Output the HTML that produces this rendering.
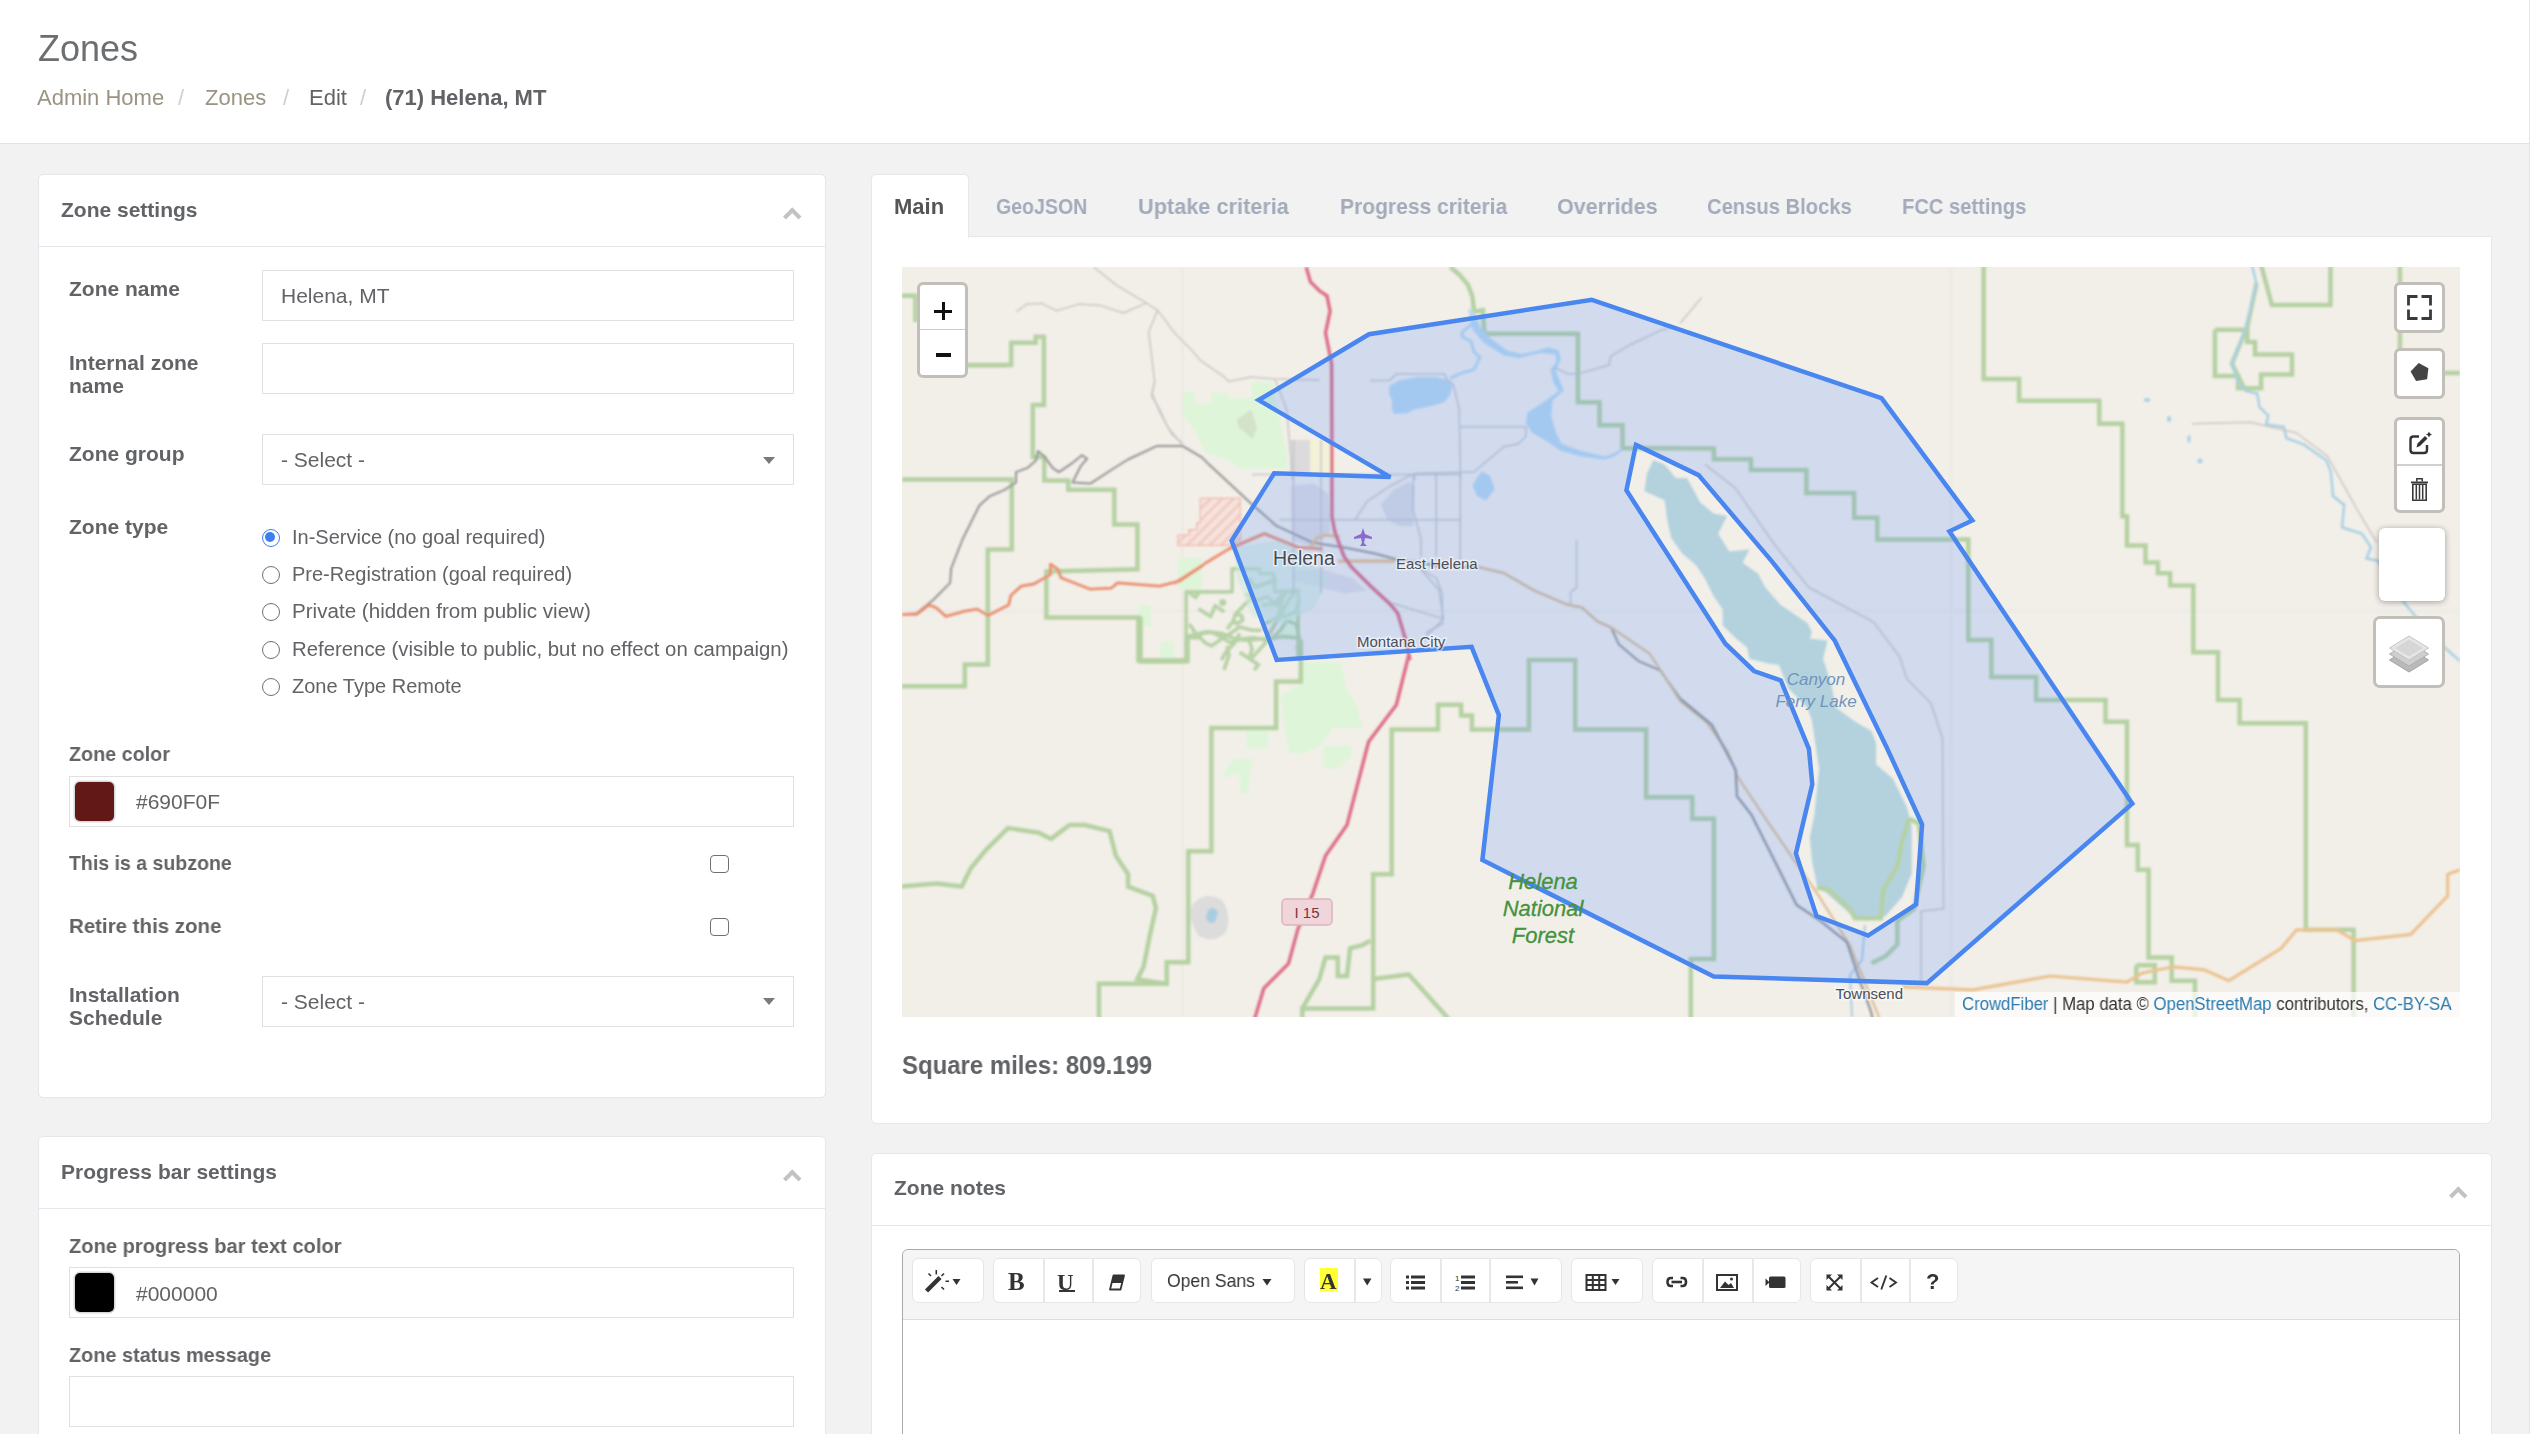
<!DOCTYPE html>
<html><head><meta charset="utf-8">
<style>
*{box-sizing:border-box;margin:0;padding:0}
html,body{width:2530px;height:1434px;overflow:hidden;background:#f2f2f2;font-family:"Liberation Sans",sans-serif;color:#616366;-webkit-font-smoothing:antialiased}
.t,.lbl,.rtxt{will-change:transform}
.abs{position:absolute}
#hdr{position:absolute;left:0;top:0;width:2530px;height:144px;background:#fff;border-bottom:1.5px solid #dfe3e8}
.t{position:absolute;white-space:nowrap;line-height:1}
.panel{position:absolute;background:#fff;border:1.5px solid #e4e7eb;border-radius:5px}
.phdr{position:absolute;left:0;right:0;top:0;border-bottom:1.5px solid #e6e8eb}
.lbl{position:absolute;white-space:nowrap;font-weight:bold;font-size:21px;color:#616366;line-height:23px}
.inp{position:absolute;border:1.5px solid #e0e0e0;background:#fff}
.caret{position:absolute;width:0;height:0;border-left:6px solid transparent;border-right:6px solid transparent;border-top:7px solid #7a7a7a}
.chev{position:absolute;width:12.5px;height:12.5px;border-left:4px solid #c2c2c2;border-top:4px solid #c2c2c2;transform:rotate(45deg)}
.radio{position:absolute;width:18px;height:18px;border:1.6px solid #707070;border-radius:50%;background:#fff}
.rtxt{position:absolute;white-space:nowrap;font-size:20px;color:#616366;line-height:1}
.grp{position:absolute;top:1258px;height:45px;background:#fff;border:1.5px solid #e6e6e6;border-radius:6px}
.grp i{position:absolute;top:0;bottom:0;width:1.5px;background:#e8e8e8}
.chk{position:absolute;width:19px;height:18px;border:1.6px solid #707070;border-radius:4px;background:#fff}
</style></head><body>
<div id="hdr">
  <div class="t" style="left:38px;top:31px;font-size:36px;color:#6c6f72">Zones</div>
  <div class="t" style="left:37px;top:87px;font-size:22px;color:#9b9384">Admin Home</div>
  <div class="t" style="left:178px;top:87px;font-size:22px;color:#cfcfcf">/</div>
  <div class="t" style="left:205px;top:87px;font-size:22px;color:#9b9384">Zones</div>
  <div class="t" style="left:283px;top:87px;font-size:22px;color:#cfcfcf">/</div>
  <div class="t" style="left:309px;top:87px;font-size:22px;color:#616366">Edit</div>
  <div class="t" style="left:360px;top:87px;font-size:22px;color:#cfcfcf">/</div>
  <div class="t" style="left:385px;top:87px;font-size:22px;color:#616366;font-weight:bold">(71) Helena, MT</div>
</div>

<!-- Zone settings panel -->
<div class="panel" style="left:38px;top:174px;width:788px;height:924px">
  <div class="phdr" style="height:71.5px"></div>
</div>
<div class="t" style="left:61px;top:199px;font-size:21px;color:#616366;font-weight:bold">Zone settings</div>
<div class="chev" style="left:786px;top:210px"></div>

<div class="lbl" style="left:69px;top:277px">Zone name</div>
<div class="inp" style="left:262px;top:270px;width:532px;height:51px"></div>
<div class="t" style="left:281px;top:285px;font-size:21px;color:#616366">Helena, MT</div>

<div class="lbl" style="left:69px;top:351px">Internal zone<br>name</div>
<div class="inp" style="left:262px;top:343px;width:532px;height:51px"></div>

<div class="lbl" style="left:69px;top:442px">Zone group</div>
<div class="inp" style="left:262px;top:434px;width:532px;height:51px"></div>
<div class="t" style="left:281px;top:449px;font-size:21px;color:#616366">- Select -</div>
<div class="caret" style="left:763px;top:457px"></div>

<div class="lbl" style="left:69px;top:515px">Zone type</div>
<div class="radio" style="left:262px;top:529px;border-color:#3b7ff0"><div style="position:absolute;left:2px;top:2px;width:10px;height:10px;border-radius:50%;background:#3b7ff0"></div></div>
<div class="rtxt" style="left:292px;top:527px">In-Service (no goal required)</div>
<div class="radio" style="left:262px;top:566px"></div>
<div class="rtxt" style="left:292px;top:564px">Pre-Registration (goal required)</div>
<div class="radio" style="left:262px;top:603px"></div>
<div class="rtxt" style="left:292px;top:601px;transform:scaleX(1.03);transform-origin:0 0">Private (hidden from public view)</div>
<div class="radio" style="left:262px;top:641px"></div>
<div class="rtxt" style="left:292px;top:639px;transform:scaleX(1.018);transform-origin:0 0">Reference (visible to public, but no effect on campaign)</div>
<div class="radio" style="left:262px;top:678px"></div>
<div class="rtxt" style="left:292px;top:676px">Zone Type Remote</div>

<div class="lbl" style="left:69px;top:742px;transform:scaleX(0.94);transform-origin:0 0">Zone color</div>
<div class="inp" style="left:69px;top:776px;width:725px;height:51px"></div>
<div class="abs" style="left:75px;top:782px;width:39px;height:39px;background:#611817;border-radius:5px;box-shadow:0 0 0 1.5px #d6d9db"></div>
<div class="t" style="left:136px;top:791px;font-size:21px;color:#616366">#690F0F</div>

<div class="lbl" style="left:69px;top:851px;transform:scaleX(0.93);transform-origin:0 0">This is a subzone</div>
<div class="chk" style="left:710px;top:855px"></div>
<div class="lbl" style="left:69px;top:914px;transform:scaleX(0.975);transform-origin:0 0">Retire this zone</div>
<div class="chk" style="left:710px;top:918px"></div>

<div class="lbl" style="left:69px;top:983px">Installation<br>Schedule</div>
<div class="inp" style="left:262px;top:976px;width:532px;height:51px"></div>
<div class="t" style="left:281px;top:991px;font-size:21px;color:#616366">- Select -</div>
<div class="caret" style="left:763px;top:998px"></div>

<!-- Progress bar settings -->
<div class="panel" style="left:38px;top:1136px;width:788px;height:400px">
  <div class="phdr" style="height:71.5px"></div>
</div>
<div class="t" style="left:61px;top:1161px;font-size:21px;color:#616366;font-weight:bold">Progress bar settings</div>
<div class="chev" style="left:786px;top:1171.5px"></div>
<div class="lbl" style="left:69px;top:1234px;transform:scaleX(0.957);transform-origin:0 0">Zone progress bar text color</div>
<div class="inp" style="left:69px;top:1267px;width:725px;height:51px"></div>
<div class="abs" style="left:75px;top:1273px;width:39px;height:39px;background:#000;border-radius:5px;box-shadow:0 0 0 1.5px #d6d9db"></div>
<div class="t" style="left:136px;top:1283px;font-size:21px;color:#616366">#000000</div>
<div class="lbl" style="left:69px;top:1343px;transform:scaleX(0.946);transform-origin:0 0">Zone status message</div>
<div class="inp" style="left:69px;top:1376px;width:725px;height:51px"></div>

<!-- Right column -->
<div class="panel" style="left:871px;top:236px;width:1621px;height:888px;border-radius:0 0 6px 6px"></div>
<div class="abs" style="left:871px;top:174px;width:98px;height:64px;background:#fff;border:1.5px solid #e4e7eb;border-bottom:none;border-radius:5px 5px 0 0"></div>
<div class="t" style="left:894px;top:196px;font-size:22px;color:#555;font-weight:bold">Main</div>
<div class="t" style="left:996px;top:196px;font-size:22px;color:#a3abba;font-weight:bold;transform:scaleX(0.889);transform-origin:0 0">GeoJSON</div>
<div class="t" style="left:1138px;top:196px;font-size:22px;color:#a3abba;font-weight:bold;transform:scaleX(0.987);transform-origin:0 0">Uptake criteria</div>
<div class="t" style="left:1340px;top:196px;font-size:22px;color:#a3abba;font-weight:bold;transform:scaleX(0.956);transform-origin:0 0">Progress criteria</div>
<div class="t" style="left:1557px;top:196px;font-size:22px;color:#a3abba;font-weight:bold;transform:scaleX(0.98);transform-origin:0 0">Overrides</div>
<div class="t" style="left:1707px;top:196px;font-size:22px;color:#a3abba;font-weight:bold;transform:scaleX(0.918);transform-origin:0 0">Census Blocks</div>
<div class="t" style="left:1902px;top:196px;font-size:22px;color:#a3abba;font-weight:bold;transform:scaleX(0.916);transform-origin:0 0">FCC settings</div>

<!-- MAP -->
<svg class="abs" style="left:902px;top:267px" width="1558" height="750" viewBox="902 267 1558 750">
<defs><filter id="bl" x="-1%" y="-1%" width="102%" height="102%"><feGaussianBlur stdDeviation="0.9"/></filter></defs>
<rect x="902" y="267" width="1558" height="750" fill="#f2efe9"/>
<g filter="url(#bl)">
<path d="M1182.5,267 V1017 M1951,267 V1017 M902,611 H2460" stroke="#e6e3de" stroke-width="1"/>
<polygon points="1182.8,391.8 1194.7,391.8 1194.7,403.6 1211.0,403.6 1211.0,392.5 1228.8,392.5 1228.8,397.7 1251.1,397.7 1251.1,381.4 1271.9,381.4 1276.4,400.7 1288.2,460.1 1286.7,469.0 1240.7,469.0 1227.3,460.1 1205.1,452.7 1194.7,430.4 1182.8,415.5" fill="#dff5d9"/>
<polygon points="1178.2,557.8 1202.0,557.8 1202.0,589.2 1178.2,589.2" fill="#dff5d9"/>
<polygon points="1138.4,604.9 1151.0,604.9 1151.0,626.9 1138.4,626.9" fill="#dff5d9"/>
<polygon points="1161.4,641.5 1174.0,641.5 1174.0,658.2 1161.4,658.2" fill="#dff5d9"/>
<polygon points="1300.6,662.0 1341.6,662.0 1346.0,688.3 1357.7,707.4 1363.5,727.9 1332.8,727.9 1321.1,745.4 1302.0,754.2 1288.9,752.8 1284.5,727.9 1280.1,695.6 1300.6,683.9" fill="#dff5d9"/>
<polygon points="1246.4,730.8 1268.4,730.8 1268.4,748.4 1246.4,748.4" fill="#dff5d9"/>
<polygon points="1234.7,758.6 1252.3,758.6 1250.8,771.8 1247.9,793.8 1240.5,793.8 1239.1,771.8 1223.0,779.1 1225.9,767.4" fill="#dff5d9"/>
<polygon points="1322.5,745.4 1351.8,745.4 1351.8,757.1 1335.7,768.9 1324.0,768.9" fill="#dff5d9"/>
<polygon points="1160.0,643.0 1174.6,643.0 1174.6,657.6 1160.0,657.6" fill="#dff5d9"/>
<polygon points="1280.0,600.0 1300.0,600.0 1300.0,640.0 1280.0,640.0" fill="#dff5d9"/>
<polygon points="1236.3,420.0 1251.1,409.6 1257.0,427.4 1252.6,439.3 1239.2,427.4" fill="#d3e2cb"/>
<pattern id="hp" width="8" height="8" patternUnits="userSpaceOnUse" patternTransform="rotate(45)"><rect width="8" height="8" fill="#f5e2dc"/><rect width="1.5" height="8" fill="#eeb9aa"/></pattern>
<polygon points="1200.2,498.4 1240.4,498.4 1240.4,545.3 1177.9,545.3 1177.9,535.2 1189.0,535.2 1189.0,529.6 1196.8,529.6 1196.8,522.9 1200.2,522.9" fill="url(#hp)" stroke="#f0b8ab" stroke-width="1.2"/>
<g fill="#dcdadb">
<rect x="1290" y="440" width="38" height="34"/>
<rect x="1300" y="450" width="8" height="10"/>
</g>
<rect x="1310" y="440" width="25" height="35" fill="#f3f1d8"/>
<polygon points="1290.4,486.0 1313.4,483.0 1328.8,493.7 1330.3,532.1 1313.4,547.4 1292.0,539.7" fill="#d8d6de" opacity="0.7"/>
<polygon points="1381.0,504.4 1393.2,490.6 1408.6,481.4 1414.7,486.0 1413.2,525.9 1399.4,525.9 1387.1,519.8" fill="#cfcfd9" opacity="0.6"/>
<polygon points="1292.0,570.4 1321.1,568.9 1351.8,578.1 1367.2,590.4 1344.1,593.4 1313.4,585.8 1295.0,581.2" fill="#d6d4dc" opacity="0.6"/>
<polygon points="1646.8,473.5 1653.5,460.1 1664.6,464.5 1675.8,477.9 1687.0,477.9 1700.3,502.5 1713.7,513.6 1727.1,515.9 1718.2,533.7 1729.3,551.6 1749.4,549.4 1742.7,562.7 1758.4,573.9 1765.1,587.3 1780.7,605.1 1807.5,623.0 1811.9,631.9 1809.7,638.6 1827.5,640.8 1823.1,658.7 1831.1,683.7 1835.8,707.4 1854.8,721.6 1871.4,731.1 1876.1,742.9 1876.1,764.3 1892.7,778.5 1906.9,806.9 1911.7,825.9 1911.7,873.3 1902.2,897.0 1885.6,915.9 1866.6,920.7 1854.8,918.3 1831.1,897.0 1816.9,885.1 1812.1,861.4 1809.8,837.7 1814.5,814.0 1816.9,790.3 1819.2,769.0 1816.9,754.8 1812.1,721.6 1807.4,707.4 1788.4,688.4 1779.0,665.0 1767.3,663.2 1749.4,658.7 1747.2,647.5 1736.0,638.6 1722.7,625.2 1722.7,609.6 1713.7,596.2 1704.8,578.4 1695.9,565.0 1682.5,553.8 1671.3,538.2 1666.9,518.1 1664.6,500.3 1644.5,491.3" fill="#b3d2de"/>
<polyline points="901.5,295.8 915.4,295.8 915.4,322.0" fill="none" stroke="#b5d1a2" stroke-width="4.5"/>
<polyline points="960.0,365.0 1011.2,365.0 1011.2,342.7 1035.7,342.7 1035.7,336.8 1043.9,336.8 1043.9,405.1 1032.8,405.1 1032.8,457.1 1043.9,457.1 1044.3,457.4 1044.3,480.4 1068.3,480.4 1068.3,489.8 1114.3,489.8 1114.3,524.4 1137.4,524.4 1137.4,569.3 1046.4,571.4 1046.4,617.4 1138.4,617.4 1138.4,660.3 1187.6,660.3 1187.6,637.3 1202.0,637.3" fill="none" stroke="#b5d1a2" stroke-width="4.5"/>
<polyline points="966.3,365.2 1006.4,365.2" fill="none" stroke="#b5d1a2" stroke-width="4.5"/>
<polyline points="902.0,479.4 1011.8,479.4 1011.8,549.5 987.8,549.5 987.8,664.5 964.8,664.5 964.8,680.0 964.8,686.2 901.5,686.2" fill="none" stroke="#b5d1a2" stroke-width="4.5"/>
<polyline points="1140.5,616.5 1140.5,639.9 1140.5,661.6 1186.7,661.6 1186.7,640.0" fill="none" stroke="#b5d1a2" stroke-width="4.5"/>
<polyline points="1300.8,640.0 1300.8,681.6 1276.1,681.6 1276.1,727.9 1211.4,727.9 1211.4,851.2 1188.3,851.2 1188.3,962.2 1166.7,962.2 1166.7,983.8 1098.9,983.8 1098.9,1019.2" fill="none" stroke="#b5d1a2" stroke-width="4.5"/>
<polyline points="901.5,886.6 918.5,885.1 937.0,883.6 961.7,886.6 970.9,868.1 986.3,849.6 1007.9,828.1 1038.7,832.7 1051.1,838.9 1069.6,825.0 1085.0,825.0 1109.6,831.1 1115.8,855.8 1128.1,874.3 1128.1,886.6 1152.8,895.9 1155.9,908.2 1149.7,936.0 1143.6,966.8 1137.4,979.1 1165.1,983.8" fill="none" stroke="#b5d1a2" stroke-width="4.5"/>
<polyline points="1498.1,729.4 1471.9,729.4 1471.9,715.5 1461.1,715.5 1461.1,704.7 1438.0,704.7 1438.0,729.4 1391.7,729.4 1391.7,874.3 1373.2,874.3 1373.2,1008.4 1302.3,1008.4 1302.3,1019.2" fill="none" stroke="#b5d1a2" stroke-width="4.5"/>
<polyline points="1302.3,1008.4 1319.3,979.1 1325.5,957.5 1337.8,957.5 1337.8,976.0 1347.0,976.0 1350.1,948.3 1362.4,945.2 1370.2,940.6" fill="none" stroke="#b5d1a2" stroke-width="4.5"/>
<polyline points="1373.2,979.1 1408.7,974.5 1424.1,991.5 1448.8,1019.2" fill="none" stroke="#b5d1a2" stroke-width="4.5"/>
<polyline points="1450.2,267.0 1459.1,274.4 1468.0,284.8 1472.5,296.7 1474.0,311.6 1482.9,310.1 1484.4,333.8 1577.9,333.8 1577.9,402.2 1599.5,402.2 1599.5,425.2 1622.5,425.2 1622.5,448.2 1670.0,448.2 1713.9,448.4 1713.9,459.2 1750.9,459.2 1750.9,470.0 1806.4,470.0 1806.4,493.1 1854.2,493.1 1854.2,517.8 1877.3,517.8 1877.3,539.4 1968.3,539.4 1968.3,639.9 1991.4,640.0 1991.4,677.0 2036.1,677.0 2036.1,700.1 2105.5,700.1 2105.5,721.7 2127.0,721.7 2127.0,845.0 2137.8,845.0 2137.8,869.7 2148.6,869.7 2148.6,957.5 2171.7,957.5 2171.7,980.7 2194.9,980.7 2194.9,1019.2" fill="none" stroke="#b5d1a2" stroke-width="4.5"/>
<polyline points="1983.7,265.0 1983.7,379.1 2019.1,379.1 2019.1,400.7 2099.3,400.7 2099.3,423.8 2122.4,423.8 2122.4,516.3 2127.0,516.3 2127.0,545.6 2145.5,545.6 2145.5,562.5 2157.9,562.5 2157.9,573.3 2170.2,573.3 2170.2,585.6 2193.3,585.6 2193.3,639.9 2193.3,652.3 2218.0,652.3 2218.0,700.1 2239.6,700.1 2239.6,723.2 2305.8,723.2 2305.8,929.8 2353.6,929.8 2353.6,1019.2" fill="none" stroke="#b5d1a2" stroke-width="4.5"/>
<polyline points="2261.1,265.0 2271.9,305.1 2330.5,305.1 2330.5,265.0" fill="none" stroke="#b5d1a2" stroke-width="4.5"/>
<polyline points="2214.9,329.7 2247.3,329.7 2247.3,342.1 2255.0,342.1 2255.0,354.4 2292.0,354.4 2292.0,374.4 2261.1,374.4 2261.1,388.3 2238.0,388.3 2238.0,376.0 2214.9,376.0 2214.9,329.7" fill="none" stroke="#b5d1a2" stroke-width="4.5"/>
<polyline points="2256.5,283.5 2247.3,326.7 2231.9,363.7 2244.2,388.3" fill="none" stroke="#b5d1a2" stroke-width="4.5"/>
<polyline points="2399.9,265.0 2399.9,372.9 2460.0,372.9" fill="none" stroke="#b5d1a2" stroke-width="4.5"/>
<polyline points="1498.1,729.4 1528.9,729.4 1528.9,660.0 1575.2,660.0 1575.2,729.4 1646.1,729.4 1646.1,797.2 1680.0,797.2 1692.3,797.2 1692.3,818.8 1713.9,818.8 1713.9,959.1 1690.8,959.1 1690.8,1019.2" fill="none" stroke="#b5d1a2" stroke-width="4.5"/>
<polyline points="2136.3,965.3 2154.8,965.3 2154.8,982.2 2136.3,982.2 2136.3,965.3" fill="none" stroke="#b5d1a2" stroke-width="4.5"/>
<polyline points="1909.3,818.8 1902.2,840.1 1897.4,866.2 1883.2,889.9 1880.9,918.3 1854.8,918.3 1850.0,908.8 1828.7,889.9 1816.9,887.5" fill="none" stroke="#b5d1a2" stroke-width="4.5"/>
<polyline points="1909.3,818.8 1918.8,823.5 1923.5,866.2 1914.0,908.8 1897.4,920.7 1897.4,944.4 1885.6,956.2 1871.4,963.3" fill="none" stroke="#b5d1a2" stroke-width="4.5"/>
<polyline points="1186.1,660.0 1186.1,591.9 1232.1,591.9 1232.1,568.9 1259.7,568.9 1259.7,573.5 1273.5,573.5 1275.1,591.9 1298.1,590.4 1298.1,660.0" fill="none" stroke="#b7d2a6" stroke-width="3.6" stroke-linejoin="round"/>
<polyline points="1186.3,660.4 1186.3,637.8 1192.6,636.5 1202.0,633.4 1211.4,632.1 1220.8,636.5 1230.2,642.8 1239.6,639.6 1249.1,640.3 1264.7,638.4" fill="none" stroke="#b7d2a6" stroke-width="3.6" stroke-linejoin="round"/>
<polyline points="1189.4,623.9 1195.7,633.4 1205.1,642.8 1211.4,645.9 1220.8,639.6 1230.2,633.4 1239.6,627.1 1252.2,630.2 1261.6,630.2" fill="none" stroke="#b7d2a6" stroke-width="3.6" stroke-linejoin="round"/>
<polyline points="1227.1,629.0 1233.4,620.8 1235.2,614.5 1241.5,615.2 1242.8,620.2 1236.5,623.9 1233.4,620.8" fill="none" stroke="#b7d2a6" stroke-width="3.6" stroke-linejoin="round"/>
<polyline points="1235.2,614.5 1242.8,606.4 1250.9,598.8" fill="none" stroke="#b7d2a6" stroke-width="3.6" stroke-linejoin="round"/>
<polyline points="1223.9,670.0 1229.0,655.3 1227.1,645.9" fill="none" stroke="#b7d2a6" stroke-width="3.6" stroke-linejoin="round"/>
<polyline points="1239.6,652.2 1249.1,658.5 1258.5,664.7 1254.1,670.0" fill="none" stroke="#b7d2a6" stroke-width="3.6" stroke-linejoin="round"/>
<polyline points="1249.1,640.3 1252.2,649.1 1249.1,658.5" fill="none" stroke="#b7d2a6" stroke-width="3.6" stroke-linejoin="round"/>
<polyline points="1189.4,592.6 1195.7,597.6 1198.8,592.6" fill="none" stroke="#b7d2a6" stroke-width="3.6" stroke-linejoin="round"/>
<polyline points="1255.3,586.3 1267.9,583.1 1277.3,580.0" fill="none" stroke="#b7d2a6" stroke-width="3.6" stroke-linejoin="round"/>
<polyline points="1261.6,605.1 1274.2,603.9 1283.6,592.6 1296.1,591.3" fill="none" stroke="#b7d2a6" stroke-width="3.6" stroke-linejoin="round"/>
<polyline points="1264.7,623.9 1277.3,617.7 1289.9,614.5 1296.1,611.4 1299.3,598.8" fill="none" stroke="#b7d2a6" stroke-width="3.6" stroke-linejoin="round"/>
<polyline points="1271.0,639.6 1280.4,630.2 1286.7,620.8 1296.1,623.9 1300.5,642.8 1296.1,649.1" fill="none" stroke="#b7d2a6" stroke-width="3.6" stroke-linejoin="round"/>
<polyline points="1283.6,592.6 1280.4,608.2 1277.3,617.7" fill="none" stroke="#b7d2a6" stroke-width="3.6" stroke-linejoin="round"/>
<polyline points="1186.1,636.4 1206.0,631.8 1221.4,633.3 1236.7,639.5 1252.1,637.9 1267.4,639.5 1282.8,636.4 1298.1,637.9" fill="none" stroke="#b7d2a6" stroke-width="3.6" stroke-linejoin="round"/>
<polyline points="1252.1,657.9 1264.3,644.1 1270.5,631.8 1279.7,616.5 1288.9,599.6 1295.0,591.9" fill="none" stroke="#b7d2a6" stroke-width="3.6" stroke-linejoin="round"/>
<polyline points="1221.4,660.0 1226.0,651.8 1233.7,644.1 1239.8,633.3" fill="none" stroke="#b7d2a6" stroke-width="3.6" stroke-linejoin="round"/>
<polyline points="1249.0,578.1 1255.1,587.3 1267.4,582.7 1276.6,578.1" fill="none" stroke="#b7d2a6" stroke-width="3.6" stroke-linejoin="round"/>
<polyline points="1245.9,593.4 1255.1,601.1 1267.4,596.5 1276.6,605.7 1285.8,593.4" fill="none" stroke="#b7d2a6" stroke-width="3.6" stroke-linejoin="round"/>
<polyline points="1198.4,608.8 1210.6,616.5 1215.2,605.7 1224.4,611.9" fill="none" stroke="#b7d2a6" stroke-width="3.6" stroke-linejoin="round"/>
<circle cx="1222.7" cy="602.6" r="3.5" fill="#b7d2a6"/>
<polygon points="1233.7,547.4 1282.8,539.7 1328.8,578.1 1313.4,608.8 1282.8,624.1 1252.1,616.5 1236.7,578.1" fill="#cfe9dc" opacity="0.6"/>
<polygon points="1389.3,385.8 1399.7,379.9 1417.5,376.9 1436.8,376.9 1448.7,379.9 1452.4,385.8 1450.2,394.7 1444.3,402.2 1429.4,406.6 1414.6,409.6 1407.1,413.3 1393.8,414.0 1391.5,408.1 1392.3,400.7 1389.3,394.7" fill="#b9d9ee"/>
<polygon points="1474.0,311.6 1479.9,326.4 1488.8,336.8 1506.6,350.2 1521.5,353.9 1533.4,351.7 1548.2,347.2 1558.6,350.2 1560.9,359.1 1555.7,371.0 1563.8,390.3 1552.7,400.7 1551.2,415.5 1555.7,431.9 1561.6,443.7 1582.4,451.2 1604.7,456.4 1613.6,453.4 1622.5,447.5 1622.5,450.4 1613.6,457.1 1604.7,459.8 1580.9,456.4 1560.1,450.4 1548.2,442.3 1531.9,432.6 1525.9,422.9 1527.4,412.6 1542.3,402.9 1558.6,391.0 1553.4,382.8 1550.5,369.5 1556.4,362.1 1555.7,354.6 1540.8,353.1 1518.5,357.9 1503.7,355.4 1482.9,342.0 1472.5,329.4 1468.0,308.6" fill="#b9d9ee"/>
<polyline points="1450.2,378.4 1459.1,373.9 1474.0,369.5 1479.9,357.6 1474.0,351.7 1471.0,341.3 1462.1,336.8 1462.1,332.3 1472.5,323.4" fill="none" stroke="#b9d9ee" stroke-width="3"/>
<polygon points="1481.4,471.6 1490.4,476.1 1494.8,489.5 1485.9,500.6 1477.0,496.2 1472.5,485.0" fill="#b9d9ee"/>
<ellipse cx="2147" cy="400" rx="3" ry="2" fill="#a9d0e4"/>
<ellipse cx="2169" cy="419" rx="2" ry="3" fill="#a9d0e4"/>
<ellipse cx="2189" cy="439" rx="1.5" ry="4" fill="#a9d0e4"/>
<ellipse cx="2200" cy="461" rx="2.5" ry="2.5" fill="#a9d0e4"/>
<polyline points="2251.9,265.0 2256.5,283.5 2250.4,308.2 2244.2,332.8 2231.9,363.7 2238.0,382.2 2246.0,391.2 2257.2,393.4 2259.4,406.8 2268.3,415.7 2266.1,424.6 2283.9,426.9 2286.2,438.0 2304.0,444.7 2326.3,460.3 2330.8,471.5 2333.0,496.0 2344.2,504.9 2342.0,527.3 2362.0,533.9 2371.0,547.3 2366.5,558.5 2377.7,560.7 2404.4,603.1 2415.6,616.5 2442.4,645.5 2460.0,661.1" fill="none" stroke="#a9d0e4" stroke-width="2.5"/>
<polyline points="1093.7,267.0 1115.9,284.8 1145.7,302.6 1157.5,310.1 1175.4,333.8 1191.7,350.2 1200.6,360.6 1224.4,376.9 1228.8,381.4 1251.1,376.9 1274.9,379.1 1319.4,379.9" fill="none" stroke="#c9c6c4" stroke-width="1.5" stroke-linejoin="round"/>
<polyline points="1016.4,311.6 1026.8,304.1 1041.7,303.4 1056.5,310.8 1078.8,304.1 1101.1,305.6 1123.4,313.0 1145.7,303.4" fill="none" stroke="#c9c6c4" stroke-width="1.5" stroke-linejoin="round"/>
<polyline points="1157.5,310.1 1148.6,332.3 1151.6,356.1 1154.6,381.4 1151.6,396.2 1159.0,408.1 1167.9,427.4 1182.8,445.2" fill="none" stroke="#c9c6c4" stroke-width="1.5" stroke-linejoin="round"/>
<polyline points="1274.9,379.1 1286.7,409.6 1292.7,480.0" fill="none" stroke="#c9c6c4" stroke-width="1.5" stroke-linejoin="round"/>
<polyline points="1155.1,380.0 1152.0,392.6 1159.3,411.4 1171.9,434.4 1182.3,442.8" fill="none" stroke="#c9c6c4" stroke-width="1.5" stroke-linejoin="round"/>
<polyline points="1680.0,323.6 1701.6,297.4" fill="none" stroke="#c9c6c4" stroke-width="1.5" stroke-linejoin="round"/>
<polyline points="2191.8,423.8 2250.4,422.2 2296.6,433.0 2327.4,456.1 2358.3,511.6 2376.8,542.5" fill="none" stroke="#c9c6c4" stroke-width="1.5" stroke-linejoin="round"/>
<polyline points="1705.1,464.3 1735.4,488.1 1774.3,544.3 1808.9,587.5 1873.7,622.1 1899.7,656.7 1906.9,679.0 1930.6,702.7 1942.5,738.2 1943.6,908.8 1921.1,911.2 1921.1,983.0" fill="none" stroke="#c9c6c4" stroke-width="1.5" stroke-linejoin="round"/>
<polyline points="1252.1,474.5 1460.0,474.5" fill="none" stroke="#c4c5ca" stroke-width="1.5" stroke-linejoin="round"/>
<polyline points="1279.7,519.8 1460.0,519.8" fill="none" stroke="#c4c5ca" stroke-width="1.5" stroke-linejoin="round"/>
<polyline points="1413.2,473.8 1413.2,510.6 1420.9,538.2 1420.9,556.6" fill="none" stroke="#c4c5ca" stroke-width="1.5" stroke-linejoin="round"/>
<polyline points="1354.9,519.8 1367.2,501.4 1390.2,486.0 1413.2,473.8" fill="none" stroke="#c4c5ca" stroke-width="1.5" stroke-linejoin="round"/>
<polyline points="1420.9,568.9 1436.2,578.1 1442.3,593.4 1442.3,624.1 1427.0,631.8 1427.0,639.5" fill="none" stroke="#c4c5ca" stroke-width="1.5" stroke-linejoin="round"/>
<polyline points="1436.2,473.8 1436.2,556.6" fill="none" stroke="#c4c5ca" stroke-width="1.5" stroke-linejoin="round"/>
<polyline points="1293.5,440.0 1293.5,593.4" fill="none" stroke="#c4c5ca" stroke-width="1.5" stroke-linejoin="round"/>
<polyline points="1321.1,440.0 1321.1,593.4" fill="none" stroke="#c4c5ca" stroke-width="1.5" stroke-linejoin="round"/>
<polyline points="1370.0,380.6 1389.3,380.6 1396.7,373.9 1444.3,373.9 1447.2,379.9 1453.2,384.3 1459.1,408.1 1460.6,480.0" fill="none" stroke="#c4c5ca" stroke-width="1.5" stroke-linejoin="round"/>
<polyline points="1460.6,426.7 1525.9,426.7 1525.9,436.3 1518.5,443.7 1503.7,446.7 1474.0,472.0 1414.6,473.4 1414.6,480.0" fill="none" stroke="#c4c5ca" stroke-width="1.5" stroke-linejoin="round"/>
<polyline points="1555.7,368.0 1567.5,373.9 1577.9,373.9 1609.1,365.0 1610.6,356.1 1631.4,344.2 1659.6,330.9 1670.0,327.9" fill="none" stroke="#c4c5ca" stroke-width="1.5" stroke-linejoin="round"/>
<polyline points="1460.2,471.6 1460.2,560.9" fill="none" stroke="#c4c5ca" stroke-width="1.5" stroke-linejoin="round"/>
<polyline points="1576.6,540.0 1576.6,587.6 1570.5,592.2 1570.5,604.4" fill="none" stroke="#c4c5ca" stroke-width="1.5" stroke-linejoin="round"/>
<polyline points="1421.2,569.8 1439.0,589.9 1443.5,618.9 1427.9,634.6" fill="none" stroke="#c4c5ca" stroke-width="1.5" stroke-linejoin="round"/>
<polyline points="1443.5,618.9 1392.1,603.3" fill="none" stroke="#c4c5ca" stroke-width="1.5" stroke-linejoin="round"/>
<polyline points="902.0,614.3 916.6,613.3 933.4,599.7 950.1,582.9 951.2,568.3 962.7,539.0 979.4,505.5 989.9,496.1 1004.5,489.8 1016.0,482.5 1016.0,472.1 1027.5,467.9 1035.9,460.5 1038.0,451.1 1044.3,456.4 1052.6,467.9 1058.9,472.1 1071.5,463.7 1081.9,455.3 1087.1,458.5 1080.9,465.8 1072.5,482.5 1090.3,483.6 1111.2,470.0 1127.9,459.5 1157.2,445.9 1182.3,445.9 1202.0,457.4 1209.1,464.6 1252.1,504.4 1276.6,525.9 1313.4,542.8 1344.1,547.4 1374.8,553.5 1397.8,559.7 1440.0,566.0 1480.7,567.6 1503.7,573.0 1534.4,590.6 1566.6,604.4 1582.0,607.5 1597.3,621.3 1611.1,627.5 1618.8,644.3 1638.7,661.2 1660.2,670.4 1680.0,698.3" fill="none" stroke="#939393" stroke-width="2" stroke-linejoin="round"/>
<polyline points="1865.0,925.0 1862.0,960.0 1850.0,975.0 1852.0,1017.0" fill="none" stroke="#a9cde0" stroke-width="2"/>
<polyline points="1680.0,701.0 1706.5,722.1 1727.7,751.3 1738.3,777.8 1759.5,809.6 1793.9,859.9 1817.8,894.4 1849.6,944.7 1878.7,1016.3 1880.0,1020.0" fill="none" stroke="#dcbd93" stroke-width="2.2"/>
<polyline points="1680.0,698.3 1711.8,724.8 1735.6,769.8 1737.0,796.3 1751.5,814.9 1775.4,862.6 1796.6,905.0 1820.4,920.9 1846.9,942.1 1860.2,981.8 1870.8,1011.0 1873.0,1020.0" fill="none" stroke="#8f9196" stroke-width="2.2"/>
<polyline points="1478.0,567.0 1503.7,573.0 1534.4,590.6 1566.6,604.4 1582.0,607.5 1597.3,621.3 1611.1,627.5 1649.5,653.5 1661.8,672.0 1680.0,701.0" fill="none" stroke="#dcbd93" stroke-width="2.2"/>
<polyline points="902.0,614.3 916.6,614.3 929.2,604.9 936.5,608.0 945.9,616.4 964.8,611.2 977.3,609.1 987.8,615.4 1008.7,604.9 1010.8,595.5 1021.2,586.1 1033.8,584.0 1050.5,574.6 1050.5,564.1 1057.9,569.3 1061.0,577.7 1090.3,589.2 1111.2,588.2 1117.5,582.9 1159.3,586.1 1180.2,580.8 1202.0,566.2 1175.3,582.7 1206.0,562.8 1229.1,548.9 1264.3,533.6 1298.1,547.4 1322.7,548.9" fill="none" stroke="#ea8d6e" stroke-width="2.8" stroke-linejoin="round"/>
<polyline points="1338.0,561.2 1394.8,561.2" fill="none" stroke="#e8c08c" stroke-width="3.2"/>
<polyline points="1310.4,547.4 1316.5,538.2 1325.7,535.1 1339.5,536.7" fill="none" stroke="#e8c08c" stroke-width="3"/>
<polyline points="1902.0,986.8 1972.9,989.9 2050.0,976.0 2127.0,982.2 2142.4,973.0 2173.3,966.8 2204.1,969.9 2228.8,980.7 2281.2,948.3 2296.6,929.8 2336.7,929.8 2355.2,940.6 2410.7,934.4 2447.7,895.9 2447.7,874.3 2460.0,869.7" fill="none" stroke="#ebc28f" stroke-width="3.2"/>
<polyline points="1306.1,267.0 1310.5,281.9 1319.4,290.8 1327.0,295.8 1330.1,311.2 1325.5,332.8 1331.6,363.7 1331.9,440.0 1331.9,516.7 1334.9,532.1 1344.1,556.6 1351.8,567.4 1371.8,587.3 1390.2,604.2 1397.8,613.4 1405.5,639.5 1410.1,660.0 1408.7,655.4 1396.4,704.7 1368.6,741.7 1347.0,825.0 1325.5,855.8 1313.1,892.8 1297.7,929.8 1288.5,963.7 1263.8,988.4 1254.5,1019.2" fill="none" stroke="#dd6c84" stroke-width="3.4"/>
<path d="M1192,905 Q1205,890 1222,900 Q1232,915 1226,932 Q1212,945 1198,935 Q1188,920 1192,905 Z" fill="#dcdcdc"/>
<path d="M1208,910 Q1213,905 1218,912 L1215,922 Q1208,925 1206,918 Z" fill="#a9cde0"/>
</g>
<path d="M1591.9,299.9 L1881.5,398.2 L1972.3,520.5 L1949.4,531.3 L2132.3,803.7 L1926.9,983.1 L1713.7,976.6 L1482.4,859.9 L1498.9,715.1 L1471.6,646.8 L1276.7,659.9 L1231.6,540.7 L1274.1,473.3 L1390.4,477.1 L1258.6,400.1 L1369.0,334.2 Z M1635.9,444.9 L1698.6,475.1 L1772.1,561.6 L1834.8,640.7 L1886.7,747.5 L1922.1,824.5 L1916.1,904.5 L1868.1,935.6 L1816.6,916.1 L1795.9,853.4 L1812.3,784.3 L1808.9,748.8 L1780.8,680.5 L1754.0,671.0 L1725.4,643.7 L1626.4,490.3 Z" fill="#528bff" fill-opacity="0.2" fill-rule="evenodd" stroke="#4a86f0" stroke-width="4.5" stroke-linejoin="miter"/>
<rect x="1282" y="899" width="50" height="26" rx="4" fill="#f0d6da" stroke="#dcb4bb" stroke-width="1.5"/>
<text x="1307" y="918" font-family="Liberation Sans" font-size="15" fill="#7a3444" text-anchor="middle">I 15</text>
<text x="1273" y="565" font-family="Liberation Sans" font-size="19.5" fill="#474b56" stroke="#ffffff" stroke-opacity="0.55" stroke-width="3" paint-order="stroke" >Helena</text>
<text x="1396" y="569" font-family="Liberation Sans" font-size="15" fill="#4b4f5a" stroke="#ffffff" stroke-opacity="0.55" stroke-width="3" paint-order="stroke" >East Helena</text>
<text x="1357" y="647" font-family="Liberation Sans" font-size="15" fill="#4b4f5a" stroke="#ffffff" stroke-opacity="0.55" stroke-width="3" paint-order="stroke" >Montana City</text>
<text x="1903" y="999" font-family="Liberation Sans" font-size="15" fill="#4b4f5a" stroke="#ffffff" stroke-opacity="0.55" stroke-width="3" paint-order="stroke" text-anchor="end">Townsend</text>
<text font-family="Liberation Sans" font-size="17" font-style="italic" fill="#7094bd" text-anchor="middle"><tspan x="1816" y="685">Canyon</tspan><tspan x="1816" y="707">Ferry Lake</tspan></text>
<text font-family="Liberation Sans" font-size="22" font-style="italic" fill="#45923f" stroke="#45923f" stroke-width="0.3" text-anchor="middle"><tspan x="1543" y="889">Helena</tspan><tspan x="1543" y="916">National</tspan><tspan x="1543" y="943">Forest</tspan></text>
<path d="M1363,528 L1365,534 L1372,537 L1372,539 L1365,538 L1364,543 L1367,546 L1360,546 L1362,543 L1361,538 L1354,539 L1354,537 L1361,534 Z" fill="#8a6bd0"/>
</svg>
<!-- leaflet controls -->
<div class="abs" style="left:917px;top:282px;width:51px;height:96px;border:3px solid #c2beb9;border-radius:6px;background:#fff">
  <div class="abs" style="left:0;top:43.7px;width:45px;height:1.5px;background:#cccccc"></div>
  <div class="abs" style="left:14px;top:25px;width:18.4px;height:3px;background:#111"></div>
  <div class="abs" style="left:21.6px;top:16.8px;width:3.1px;height:18.4px;background:#111"></div>
  <div class="abs" style="left:16px;top:67.8px;width:14.6px;height:4.2px;background:#111"></div>
</div>
<div class="abs" style="left:2394px;top:282px;width:51px;height:51px;border:3px solid #c2beb9;border-radius:6px;background:#fff">
  <svg class="abs" style="left:0;top:0" width="45" height="45" viewBox="0 0 45 45"><path d="M11.5,20.5 V11.5 H20.5 M24.5,11.5 H33.5 V20.5 M33.5,24.5 V33.5 H24.5 M20.5,33.5 H11.5 V24.5" fill="none" stroke="#3a3a3a" stroke-width="2.8"/></svg>
</div>
<div class="abs" style="left:2394px;top:348px;width:51px;height:51px;border:3px solid #c2beb9;border-radius:6px;background:#fff">
  <svg class="abs" style="left:0;top:0" width="45" height="45" viewBox="0 0 45 45"><polygon points="21.7,11.9 31.4,17.3 30.1,28.3 19.1,30.1 13.6,20.4" fill="#444"/></svg>
</div>
<div class="abs" style="left:2394px;top:417px;width:51px;height:96px;border:3px solid #c2beb9;border-radius:6px;background:#fff">
  <div class="abs" style="left:0;top:44px;width:45px;height:1.5px;background:#d0d0d0"></div>
  <svg class="abs" style="left:0;top:0" width="45" height="90" viewBox="0 0 45 90">
    <path d="M22,16.5 H16.5 Q13.5,16.5 13.5,19.5 V30 Q13.5,33 16.5,33 H27 Q30,33 30,30 V25" fill="none" stroke="#333" stroke-width="2.4"/>
    <path d="M19.5,27.5 L20.5,23.5 L28,16 L30.5,18.5 L23,26 Z" fill="#333"/>
    <path d="M32,11.5 L33,13.5 L35,14.5 L33,15.5 L32,17.5 L31,15.5 L29,14.5 L31,13.5 Z" fill="#333"/>
    <rect x="14" y="61.5" width="17" height="1.8" fill="#3a3a3a"/>
    <path d="M19.8,61.5 V58.8 H25.2 V61.5" fill="none" stroke="#3a3a3a" stroke-width="1.5"/>
    <path d="M15.8,64.2 H29.2 V80.2 H15.8 Z" fill="none" stroke="#3a3a3a" stroke-width="1.6"/>
    <path d="M19.3,65 V79.5 M22.5,65 V79.5 M25.7,65 V79.5" stroke="#3a3a3a" stroke-width="1.5"/>
  </svg>
</div>
<div class="abs" style="left:2379px;top:528px;width:66px;height:73px;border-radius:6px;background:#fff;box-shadow:0 1px 6px rgba(0,0,0,0.35)"></div>
<div class="abs" style="left:2373px;top:616px;width:72px;height:72px;border:3px solid #c2beb9;border-radius:7px;background:#fff">
  <svg class="abs" style="left:0;top:0" width="66" height="66" viewBox="0 0 66 66">
    <path d="M13.5,41 L33,29 L52.5,41 L33,53 Z" fill="#b9b9b9" stroke="#a5a5a5" stroke-width="1"/>
    <path d="M13.5,35 L33,23 L52.5,35 L33,47 Z" fill="#cfcfcf" stroke="#b0b0b0" stroke-width="1"/>
    <path d="M13.5,29 L33,17 L52.5,29 L33,41 Z" fill="#e6e6e6" stroke="#c4c4c4" stroke-width="1"/>
    <path d="M19,29 L33,20.5 L47,29 L33,37.5 Z" fill="#d6d6d6"/>
  </svg>
</div>
<!-- attribution -->
<div class="abs" style="left:1955px;top:992px;width:505px;height:25px;background:rgba(255,255,255,0.7)"></div>
<div class="t" style="left:1962px;top:996px;font-size:17.5px;color:#333;transform:scaleX(0.956);transform-origin:0 0"><span style="color:#2a7bb0">CrowdFiber</span> | Map data © <span style="color:#2a7bb0">OpenStreetMap</span> contributors, <span style="color:#2a7bb0">CC-BY-SA</span></div>

<div class="t" style="left:902px;top:1053px;font-size:25px;color:#616366;font-weight:bold;transform:scaleX(0.958);transform-origin:0 0">Square miles: 809.199</div>

<!-- Zone notes -->
<div class="panel" style="left:871px;top:1153px;width:1621px;height:400px">
  <div class="phdr" style="height:71.5px"></div>
</div>
<div class="t" style="left:894px;top:1177px;font-size:21px;color:#616366;font-weight:bold">Zone notes</div>
<div class="chev" style="left:2452px;top:1189px"></div>

<div class="abs" style="left:902px;top:1249px;width:1558px;height:250px;border:1.5px solid #a9a9a9;border-radius:6px;background:#fff">
  <div class="abs" style="left:0;top:0;right:0;height:70px;background:#f5f5f5;border-bottom:1.5px solid #ddd;border-radius:6px 6px 0 0"></div>
</div>
<!-- toolbar groups -->
<div class="grp" style="left:912px;width:72px"></div>
<div class="grp" style="left:993px;width:148px"><i style="left:49px"></i><i style="left:98px"></i></div>
<div class="grp" style="left:1151px;width:144px"></div>
<div class="grp" style="left:1304px;width:78px"><i style="left:49px"></i></div>
<div class="grp" style="left:1390px;width:172px"><i style="left:49px"></i><i style="left:98px"></i></div>
<div class="grp" style="left:1571px;width:72px"></div>
<div class="grp" style="left:1652px;width:149px"><i style="left:49px"></i><i style="left:99px"></i></div>
<div class="grp" style="left:1810px;width:148px"><i style="left:49px"></i><i style="left:98px"></i></div>
<svg class="abs" style="left:902px;top:1249px" width="1100" height="70" viewBox="902 1249 1100 70">
  <!-- magic wand -->
  <path d="M926.5,1291 L940,1277.5" stroke="#333" stroke-width="4.5" stroke-linecap="butt"/>
  <path d="M936.3,1270 V1274.5 M928.5,1273.5 L931,1276 M944,1273.5 L941.5,1276 M945.5,1281.2 H949 M941.5,1287 L944,1289.5" stroke="#333" stroke-width="1.6"/>
  <path d="M952.5,1279 H960.5 L956.5,1285 Z" fill="#333"/>
  <!-- eraser -->
  <path d="M1113.5,1275.5 H1124 L1120.5,1289.5 H1110 Z" fill="none" stroke="#333" stroke-width="1.8" stroke-linejoin="round"/>
  <path d="M1113.5,1275.5 H1124 L1122,1283 H1111.5 Z" fill="#333"/>
  <!-- font caret -->
  <path d="M1262.5,1279 H1271.5 L1267,1285.5 Z" fill="#333"/>
  <!-- highlight -->
  <rect x="1320" y="1268" width="18" height="23.5" fill="#ffff33"/>
  <path d="M1363,1278.5 H1371.5 L1367.2,1285.5 Z" fill="#333"/>
  <!-- ul -->
  <g fill="#333"><rect x="1406" y="1275.5" width="3" height="3"/><rect x="1406" y="1281" width="3" height="3"/><rect x="1406" y="1286.5" width="3" height="3"/>
  <rect x="1411" y="1275.5" width="14" height="3"/><rect x="1411" y="1281" width="14" height="3"/><rect x="1411" y="1286.5" width="14" height="3"/></g>
  <!-- ol -->
  <g fill="#333"><rect x="1461" y="1275.5" width="14" height="3"/><rect x="1461" y="1281" width="14" height="3"/><rect x="1461" y="1286.5" width="14" height="3"/></g>
  <text x="1455" y="1281" font-family="Liberation Sans" font-size="8" fill="#333">1</text>
  <text x="1455" y="1290.5" font-family="Liberation Sans" font-size="8" fill="#333">2</text>
  <!-- align -->
  <g fill="#333"><rect x="1506" y="1275.5" width="17" height="2.6"/><rect x="1506" y="1281" width="12" height="2.6"/><rect x="1506" y="1286.5" width="17" height="2.6"/></g>
  <path d="M1530.5,1278.5 H1538.5 L1534.5,1285.5 Z" fill="#333"/>
  <!-- table -->
  <g fill="none" stroke="#333" stroke-width="2"><rect x="1586.5" y="1275" width="19" height="15"/><path d="M1586.5,1280 H1605.5 M1586.5,1285 H1605.5 M1592.8,1275 V1290 M1599.2,1275 V1290"/></g>
  <path d="M1611.5,1279 H1619.5 L1615.5,1285 Z" fill="#333"/>
  <!-- link -->
  <g fill="none" stroke="#333" stroke-width="2.6"><path d="M1673,1278 H1671 Q1667.5,1278 1667.5,1282 Q1667.5,1286 1671,1286 H1673"/><path d="M1680.5,1278 H1682.5 Q1686,1278 1686,1282 Q1686,1286 1682.5,1286 H1680.5"/><path d="M1671.5,1282 H1682"/></g>
  <!-- image -->
  <rect x="1717" y="1275" width="20" height="15" fill="none" stroke="#333" stroke-width="2"/>
  <path d="M1720,1288 L1725,1281.5 L1728.5,1285 L1731,1283 L1734,1288 Z" fill="#333"/>
  <circle cx="1731.5" cy="1279" r="1.5" fill="#333"/>
  <!-- video -->
  <rect x="1769" y="1276.5" width="16.5" height="11.5" rx="1.5" fill="#333"/>
  <path d="M1765.5,1278.5 L1769.5,1282.3 L1765.5,1286 Z" fill="#333"/>
  <!-- fullscreen arrows -->
  <g stroke="#333" stroke-width="2" fill="none"><path d="M1828,1276 L1841,1289 M1841,1276 L1828,1289"/></g>
  <g fill="#333"><path d="M1826.5,1274.5 H1832 L1826.5,1280 Z"/><path d="M1842.5,1274.5 H1837 L1842.5,1280 Z"/><path d="M1826.5,1290.5 H1832 L1826.5,1285 Z"/><path d="M1842.5,1290.5 H1837 L1842.5,1285 Z"/></g>
  <!-- code -->
  <g stroke="#333" stroke-width="1.9" fill="none"><path d="M1878,1278 L1871.5,1282.5 L1878,1287"/><path d="M1889.5,1278 L1896,1282.5 L1889.5,1287"/><path d="M1886.3,1275.5 L1881.3,1289.5"/></g>
</svg>
<div class="t" style="left:1008px;top:1269px;font-family:'Liberation Serif',serif;font-weight:bold;font-size:25px;color:#333">B</div>
<div class="t" style="left:1057px;top:1271px;font-family:'Liberation Serif',serif;font-weight:bold;font-size:23px;color:#333">U</div>
<div class="abs" style="left:1059px;top:1290px;width:16px;height:1.8px;background:#333"></div>
<div class="t" style="left:1167px;top:1271px;font-size:19px;color:#333;transform:scaleX(0.925);transform-origin:0 0">Open Sans</div>
<div class="t" style="left:1320px;top:1270px;font-family:'Liberation Serif',serif;font-weight:bold;font-size:23px;color:#333">A</div>
<div class="t" style="left:1926px;top:1271px;font-weight:bold;font-size:22px;color:#333">?</div>
<div class="abs" style="left:2529px;top:0;width:1px;height:1434px;background:#e4e4e4"></div>
</body></html>
